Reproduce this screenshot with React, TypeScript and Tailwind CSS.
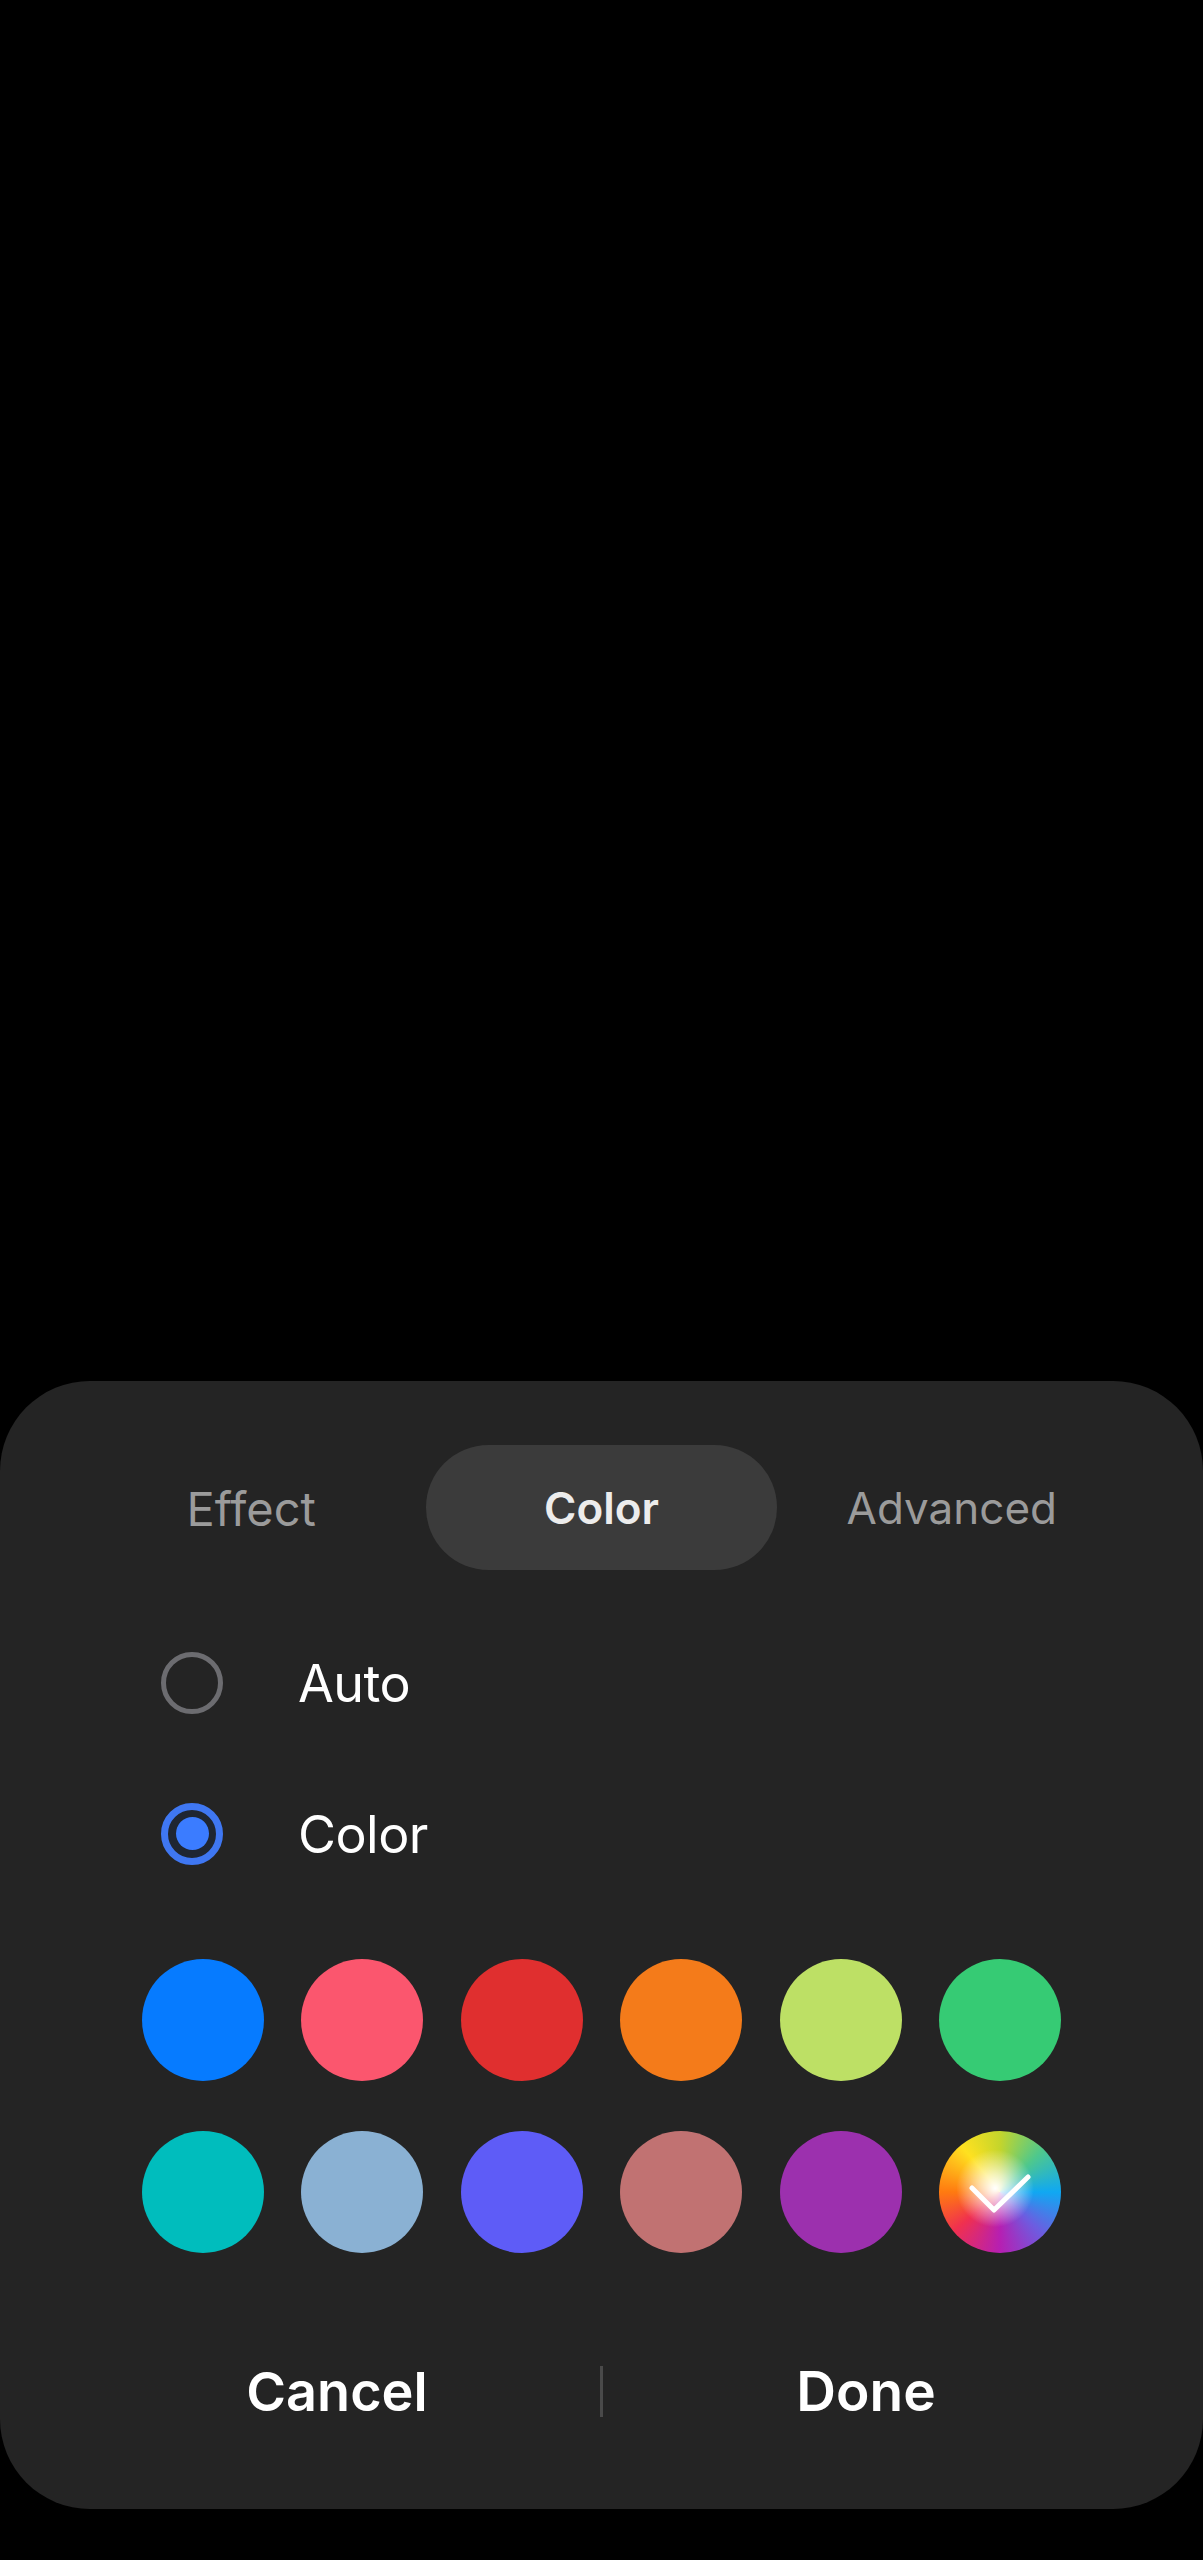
import React from 'react';

const swatchRows = [
  ['bg-[#067bff]', 'bg-[#fb566e]', 'bg-[#e02f2f]', 'bg-[#f47b1a]', 'bg-[#bde065]', 'bg-[#36cb74]'],
  ['bg-[#00bdbd]', 'bg-[#8ab1d3]', 'bg-[#5e5cf7]', 'bg-[#c17272]', 'bg-[#9c30ae]'],
];

const Radio: React.FC<{ checked?: boolean }> = ({ checked }) =>
  checked ? (
    <div className="w-[62px] h-[62px] rounded-full border-[7px] border-[#3f77f2] bg-[#1f2632] flex items-center justify-center shrink-0">
      <div className="w-[33px] h-[33px] rounded-full bg-[#3b7cff]" />
    </div>
  ) : (
    <div className="w-[62px] h-[62px] rounded-full border-[5px] border-[#6c6c70] shrink-0" />
  );

const ColorWheel: React.FC = () => (
  <div className="relative w-[122px] h-[122px] rounded-full bg-[conic-gradient(#c4d52c_0deg,#4fc88c_45deg,#10a8f2_90deg,#6d5ce0_135deg,#b61fb2_180deg,#f0304f_230deg,#ff7a10_270deg,#ffe120_320deg,#c4d52c_360deg)] overflow-hidden">
    <div className="absolute inset-0 rounded-full bg-[radial-gradient(circle_at_46%_47%,#ffffff_0%,rgba(255,255,255,0.65)_16%,rgba(255,255,255,0)_42%)]" />
    <svg className="absolute inset-0" width="122" height="122" viewBox="0 0 122 122" fill="none">
      <path d="M33 57 L55 79 L89 46" stroke="#ffffff" strokeWidth="5" strokeLinecap="round" strokeLinejoin="round" />
    </svg>
  </div>
);

const App: React.FC = () => {
  return (
    <div className="bg-black h-[2560px] w-full pt-[1381px] font-['Inter','Noto_Sans',sans-serif] overflow-hidden">
      <div className="bg-[#242424] h-[1128px] rounded-[90px] pt-[64px]">
        {/* Tabs */}
        <div className="grid grid-cols-3 w-[1051px] mx-auto h-[125px] items-center text-center text-[44px]">
          <div className="pt-[3px] text-[47px] text-[#9b9b9b]">Effect</div>
          <div className="h-full rounded-full bg-[#3b3b3b] flex items-center justify-center font-semibold text-[#ececec]">Color</div>
          <div className="text-[#9b9b9b]">Advanced</div>
        </div>

        {/* Radio rows */}
        <div className="mt-[37px] pl-[161px]">
          <div className="h-[151px] flex items-center gap-[75px]">
            <Radio />
            <span className="pt-[2px] text-[52px] tracking-[-0.01em] text-white">Auto</span>
          </div>
          <div className="h-[151px] flex items-center gap-[75px]">
            <Radio checked />
            <span className="pt-[2px] text-[52px] tracking-[-0.01em] text-white">Color</span>
          </div>
        </div>

        {/* Swatches */}
        <div className="mt-[50px] w-[919px] ml-[142px] flex flex-col gap-[50px]">
          {swatchRows.map((row, i) => (
            <div key={i} className="flex justify-between">
              {row.map((color) => (
                <div key={color} className={`w-[122px] h-[122px] rounded-full ${color}`} />
              ))}
              {i === 1 && <ColorWheel />}
            </div>
          ))}
        </div>

        {/* Actions */}
        <div className="mt-[88px] px-[74px] flex items-center h-[100px] text-[55px] font-semibold text-white">
          <div className="flex-1 text-center text-[54px]">Cancel</div>
          <div className="w-[3px] h-[51px] bg-[#4a4a4a]" />
          <div className="flex-1 text-center">Done</div>
        </div>
      </div>
    </div>
  );
};

export default App;
